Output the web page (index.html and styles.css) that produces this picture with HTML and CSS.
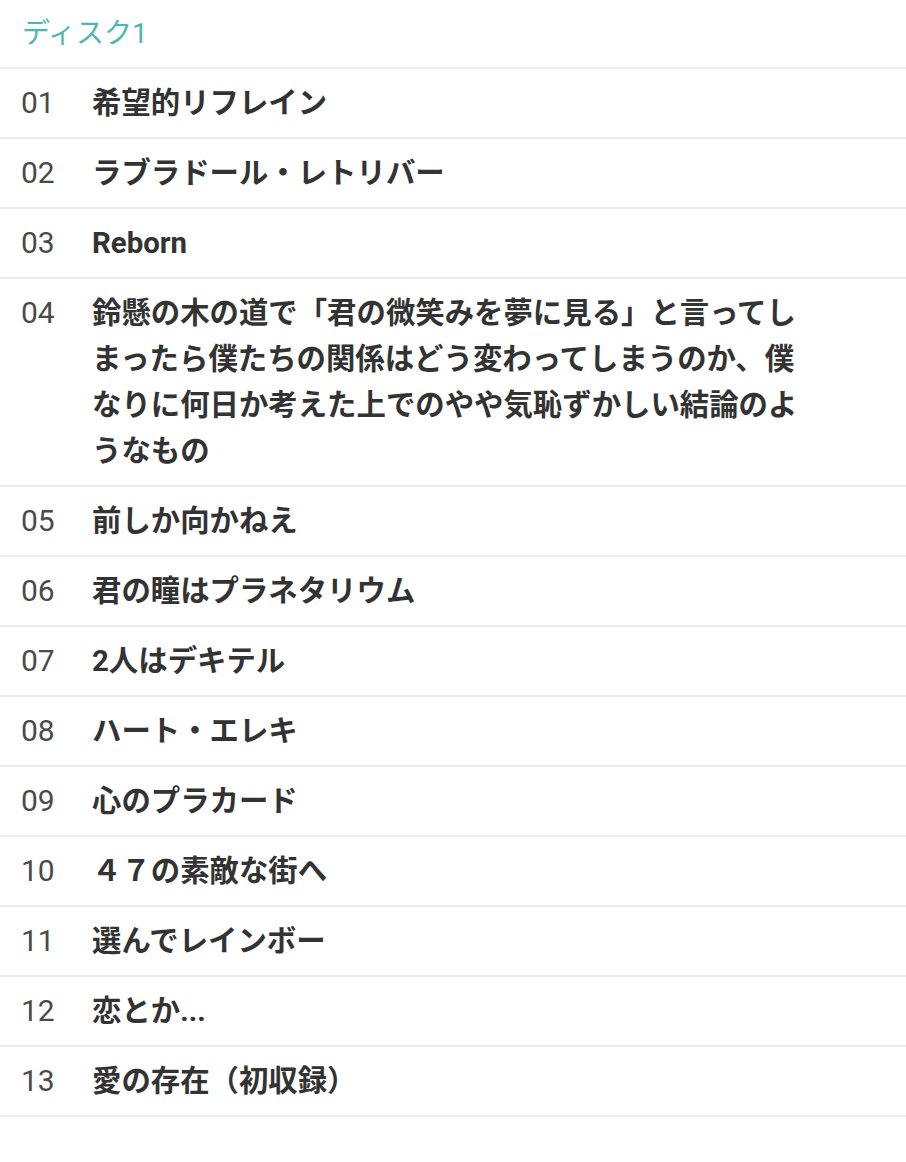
FILE: index.html
```html
<!DOCTYPE html>
<html lang="ja">
<head>
<meta charset="utf-8">
<link rel="stylesheet" href="styles.css">
</head>
<body>
<div class="disc">
  <div class="disc-title">ディスク1</div>
  <ul class="tracks">
    <li class="track"><span class="num">01</span><span class="name">希望的リフレイン</span></li>
    <li class="track"><span class="num">02</span><span class="name">ラブラドール・レトリバー</span></li>
    <li class="track"><span class="num">03</span><span class="name">Reborn</span></li>
    <li class="track"><span class="num">04</span><span class="name">鈴懸の木の道で「君の微笑みを夢に見る」と言ってしまったら僕たちの関係はどう変わってしまうのか、僕なりに何日か考えた上でのやや気恥ずかしい結論のようなもの</span></li>
    <li class="track"><span class="num">05</span><span class="name">前しか向かねえ</span></li>
    <li class="track"><span class="num">06</span><span class="name">君の瞳はプラネタリウム</span></li>
    <li class="track"><span class="num">07</span><span class="name">2人はデキテル</span></li>
    <li class="track"><span class="num">08</span><span class="name">ハート・エレキ</span></li>
    <li class="track"><span class="num">09</span><span class="name">心のプラカード</span></li>
    <li class="track"><span class="num">10</span><span class="name">４７の素敵な街へ</span></li>
    <li class="track"><span class="num">11</span><span class="name">選んでレインボー</span></li>
    <li class="track"><span class="num">12</span><span class="name">恋とか...</span></li>
    <li class="track"><span class="num">13</span><span class="name">愛の存在（初収録）</span></li>
  </ul>
</div>
</body>
</html>
```

FILE: styles.css
```css
html, body {
  margin: 0;
  padding: 0;
  background: #ffffff;
}
body {
  font-family: Roboto, "Noto Sans CJK JP", sans-serif;
}
.disc-title {
  height: 67px;
  line-height: 68px;
  padding-left: 22px;
  font-size: 28px;
  color: #4db8b0;
  border-bottom: 2px solid #ececec;
}
.tracks {
  list-style: none;
  margin: 0;
  padding: 0;
}
.track {
  display: flex;
  align-items: flex-start;
  padding: 11px 0;
  border-bottom: 2px solid #ececec;
  line-height: 46px;
}
.num {
  flex: 0 0 92px;
  box-sizing: border-box;
  padding-left: 21px;
  font-size: 30px;
  color: #4a4a4a;
}
.name {
  max-width: 716px;
  font-size: 29.4px;
  font-weight: 700;
  color: #333333;
}
```
